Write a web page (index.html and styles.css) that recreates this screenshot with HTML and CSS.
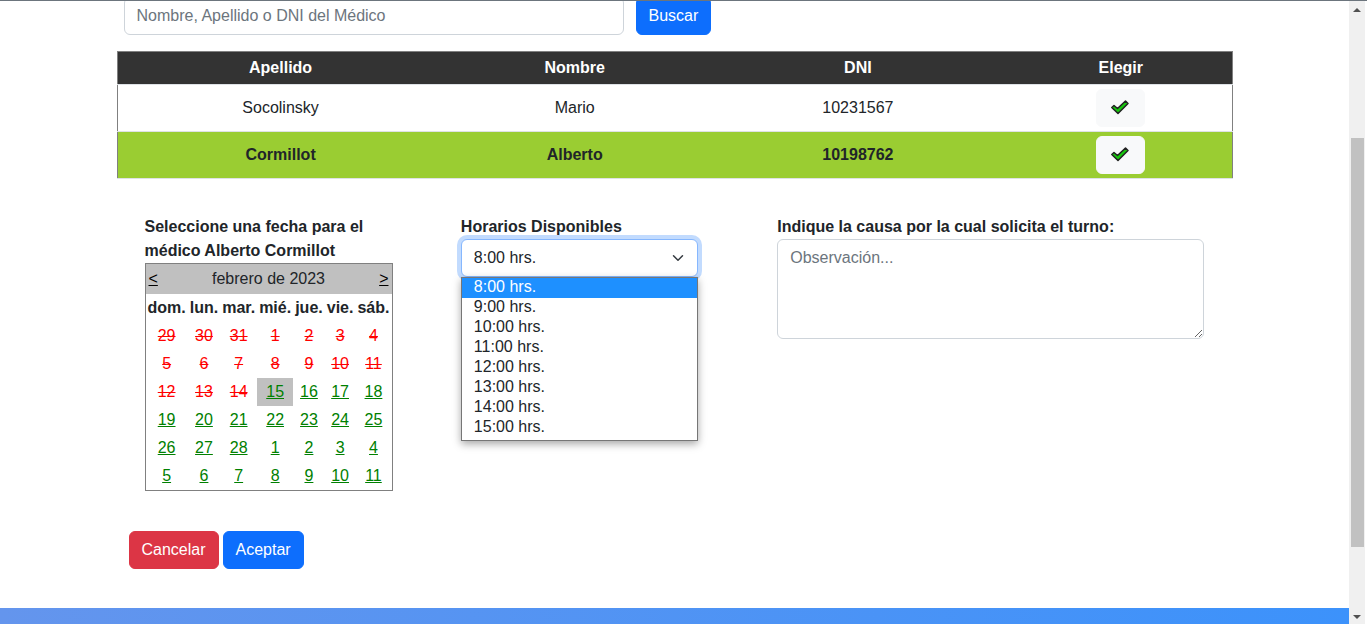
FILE: index.html
```html
<!DOCTYPE html>
<html lang="es">
<head>
<meta charset="utf-8">
<title>Solicitar turno</title>
<link rel="stylesheet" href="styles.css">
</head>
<body>
<div class="viewport">
  <div class="page">
    <main class="container">
      <form class="search">
        <input class="control search-input" type="text" aria-label="Buscar médico" placeholder="Nombre, Apellido o DNI del Médico">
        <button class="btn btn-primary" type="button">Buscar</button>
      </form>

      <table class="doctors">
        <colgroup><col class="col-surname"><col class="col-name"><col class="col-dni"><col class="col-pick"></colgroup>
        <thead>
          <tr><th>Apellido</th><th>Nombre</th><th>DNI</th><th>Elegir</th></tr>
        </thead>
        <tbody>
          <tr>
            <td>Socolinsky</td><td>Mario</td><td>10231567</td>
            <td><button class="btn btn-light" type="button" aria-label="Elegir a Mario Socolinsky"><svg class="check" viewBox="0 0 23 24"><path d="M2.800 11.500L5 9.500 8.500 12.500 16.500 5 19 7.500 9 17.500z"/></svg></button></td>
          </tr>
          <tr class="selected">
            <td>Cormillot</td><td>Alberto</td><td>10198762</td>
            <td><button class="btn btn-light" type="button" aria-label="Elegir a Alberto Cormillot"><svg class="check" viewBox="0 0 23 24"><path d="M2.800 11.500L5 9.500 8.500 12.500 16.500 5 19 7.500 9 17.500z"/></svg></button></td>
          </tr>
        </tbody>
      </table>

      <form class="booking">
        <section>
          <h2 class="label">Seleccione una fecha para el médico Alberto Cormillot</h2>
          <div class="calendar">
            <div class="month"><a href="#">&lt;</a><span>febrero de 2023</span><a href="#">&gt;</a></div>
            <table class="days">
              <thead><tr><th>dom.</th><th>lun.</th><th>mar.</th><th>mié.</th><th>jue.</th><th>vie.</th><th>sáb.</th></tr></thead>
              <tbody>
                <tr class="past"><td>29</td><td>30</td><td>31</td><td>1</td><td>2</td><td>3</td><td>4</td></tr>
                <tr class="past"><td>5</td><td>6</td><td>7</td><td>8</td><td>9</td><td>10</td><td>11</td></tr>
                <tr><td class="past">12</td><td class="past">13</td><td class="past">14</td><td class="today"><a href="#">15</a></td><td><a href="#">16</a></td><td><a href="#">17</a></td><td><a href="#">18</a></td></tr>
                <tr><td><a href="#">19</a></td><td><a href="#">20</a></td><td><a href="#">21</a></td><td><a href="#">22</a></td><td><a href="#">23</a></td><td><a href="#">24</a></td><td><a href="#">25</a></td></tr>
                <tr><td><a href="#">26</a></td><td><a href="#">27</a></td><td><a href="#">28</a></td><td><a href="#">1</a></td><td><a href="#">2</a></td><td><a href="#">3</a></td><td><a href="#">4</a></td></tr>
                <tr><td><a href="#">5</a></td><td><a href="#">6</a></td><td><a href="#">7</a></td><td><a href="#">8</a></td><td><a href="#">9</a></td><td><a href="#">10</a></td><td><a href="#">11</a></td></tr>
              </tbody>
            </table>
          </div>
        </section>

        <section>
          <label class="label" for="hours">Horarios Disponibles</label>
          <div class="dropdown">
            <select class="control hours" id="hours"><option>8:00 hrs.</option></select>
            <svg class="chevron" viewBox="0 0 16 16"><path d="M2 5l6 6 6-6"/></svg>
            <ul class="options" role="listbox" aria-label="Horarios Disponibles">
              <li class="active" role="option" aria-selected="true">8:00 hrs.</li>
              <li role="option">9:00 hrs.</li>
              <li role="option">10:00 hrs.</li>
              <li role="option">11:00 hrs.</li>
              <li role="option">12:00 hrs.</li>
              <li role="option">13:00 hrs.</li>
              <li role="option">14:00 hrs.</li>
              <li role="option">15:00 hrs.</li>
            </ul>
          </div>
        </section>

        <section>
          <label class="label" for="reason">Indique la causa por la cual solicita el turno:</label>
          <textarea class="control reason" id="reason" placeholder="Observación..."></textarea>
        </section>
      </form>

      <div class="actions">
        <button class="btn btn-danger" type="button">Cancelar</button>
        <button class="btn btn-primary" type="button">Aceptar</button>
      </div>
    </main>
    <footer class="footer"></footer>
  </div>
  <div class="scrollbar" aria-hidden="true">
    <svg class="arrow" viewBox="0 0 8 4"><path d="M0 4l4-4 4 4z"/></svg>
    <div class="track"><div class="thumb"></div></div>
    <svg class="arrow" viewBox="0 0 8 4"><path d="M0 0h8L4 4z"/></svg>
  </div>
</div>
</body>
</html>
```
FILE: styles.css
```css
* { box-sizing: border-box; }

body {
  margin: 0;
  color: #212529;
  background: #fff;
  font: 16px/24px "Liberation Sans", Arial, sans-serif;
}

.viewport {
  display: flex;
  height: 100vh;
  padding: 0 2px 1px 0;
  border-top: 1px solid #6c757d;
  overflow: hidden;
}

.page {
  display: flex;
  flex: 1;
  flex-direction: column;
  min-width: 0;
  overflow: hidden;
}

.container {
  width: 100%;
  max-width: 1140px;
  margin: 0 auto;
  padding: 0 12px;
}

.control {
  display: block;
  width: 100%;
  margin: 0;
  padding: 6px 12px;
  color: #212529;
  background: #fff;
  border: 1px solid #ced4da;
  border-radius: 6px;
  outline: 0;
  font: inherit;
}
.control::placeholder { color: #6c757d; opacity: 1; }

.btn {
  padding: 6px 12px;
  color: #fff;
  border: 1px solid transparent;
  border-radius: 6px;
  font: inherit;
  cursor: pointer;
}
.btn-primary { background: #0d6efd; border-color: #0d6efd; }
.btn-danger { background: #dc3545; border-color: #dc3545; }
.btn-light { background: #f8f9fa; border-color: #f8f9fa; }

/* The page is scrolled, so the row starts above the window. */
.search {
  display: flex;
  gap: 12px;
  margin: -4px 0 16px;
  padding: 0 7px;
}
.search-input { max-width: 500px; }

.doctors {
  width: 100%;
  table-layout: fixed;
  border-collapse: collapse;
  border: 1px solid #808080;
  text-align: center;
}
.doctors tr { border-bottom: 1px solid #dee2e6; }
.doctors th, .doctors td { padding: 4px; vertical-align: middle; }
.doctors th { color: #fff; background: #333; }
.doctors .btn { display: block; margin: 0 auto; }
.col-surname { width: 29.3%; }
.col-name { width: 23.5%; }
.col-dni { width: 27.3%; }
.col-pick { width: 19.9%; }
.selected { background: #9acd32; font-weight: 700; }

.check {
  display: block;
  width: 23px;
  height: 24px;
  fill: #16c60c;
  stroke: #222;
  stroke-width: 1.5;
  stroke-linejoin: round;
}

.booking {
  display: grid;
  grid-template-columns: minmax(0, 5fr) minmax(0, 5fr) minmax(0, 9fr);
  gap: 79px;
  padding: 36px 28px 0;
}
.label { display: block; margin: 0; font: inherit; font-weight: 700; }

.calendar { width: 248px; border: 1px solid #808080; }
.month {
  display: flex;
  justify-content: space-between;
  padding: 3px;
  background: #c0c0c0;
}
.month a { color: #000; }
.days { width: 100%; border-collapse: collapse; text-align: center; }
.days th, .days td { padding: 2px; }
.days a { color: #008000; }
.past { color: #f00; text-decoration: line-through; }
.today { background: #c0c0c0; }

.dropdown { position: relative; }
.hours {
  appearance: none;
  border-color: #86b7fe;
  box-shadow: 0 0 0 4px #c2dbfe;
}
.chevron {
  position: absolute;
  top: 13px;
  right: 14px;
  width: 12px;
  height: 12px;
  fill: none;
  stroke: #343a40;
  stroke-width: 2;
  stroke-linecap: round;
  stroke-linejoin: round;
  pointer-events: none;
}
.options {
  position: absolute;
  top: 100%;
  left: 0;
  right: 0;
  margin: 0;
  padding: 0 0 2px;
  background: #fff;
  border: 1px solid #767676;
  box-shadow: 0 3px 8px rgba(0, 0, 0, .35);
  list-style: none;
}
.options li { height: 20px; padding: 0 12px; line-height: 18px; }
.options .active { color: #fff; background: #1e90ff; }

.reason { height: 100px; resize: both; }

.actions { display: flex; gap: 4px; padding: 40px 12px 39px; }

.footer { flex: 1; background: linear-gradient(to right, #6495ed, #3c92fb); }

.scrollbar {
  display: flex;
  flex-direction: column;
  align-items: center;
  width: 16px;
  padding: 7px 0 5px;
  background: #f0f0f0;
}
.arrow { width: 8px; height: 4px; fill: #505050; }
.track {
  display: flex;
  flex: 1;
  flex-direction: column;
  width: 13px;
  padding: 126px 0 68px;
}
.thumb { flex: 1; background: #c1c1c1; }
```
